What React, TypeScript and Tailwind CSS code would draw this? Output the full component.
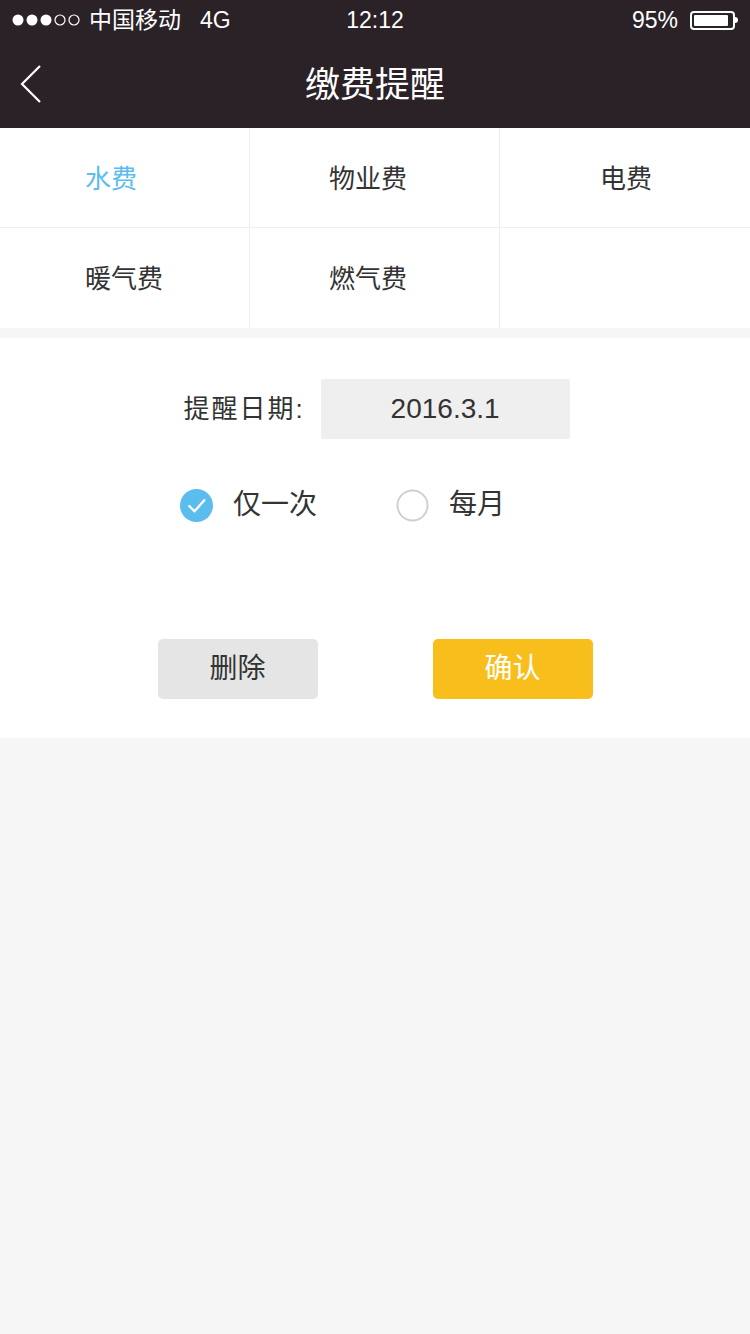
import { useState } from "react";

const fees = ["水费", "物业费", "电费", "暖气费", "燃气费", ""];
const padL = ["pl-[85px]", "pl-[79px]", "pl-[100px]"];

const font = { fontFamily: '"Liberation Sans", "Noto Sans CJK SC", sans-serif' };

function Radio({ checked }: { checked: boolean }) {
  if (checked) {
    return (
      <svg width="33" height="33" viewBox="0 0 34 34">
        <circle cx="17" cy="17" r="17" fill="#5bbcef" />
        <path d="M9.5 17.5 L15 23 L25 11.5" fill="none" stroke="#fff" strokeWidth="2.4" strokeLinecap="round" strokeLinejoin="round" />
      </svg>
    );
  }
  return (
    <svg width="33" height="33" viewBox="0 0 34 34">
      <circle cx="17" cy="17" r="15.5" fill="#fff" stroke="#cfcfcf" strokeWidth="2" />
    </svg>
  );
}

function Signal() {
  return (
    <svg width="68" height="14" viewBox="0 0 68 14">
      {[0, 1, 2, 3, 4].map((i) => (
        <circle
          key={i}
          cx={6 + i * 14}
          cy={7}
          r={i < 3 ? 5.5 : 5}
          fill={i < 3 ? "#fff" : "none"}
          stroke="#fff"
          strokeWidth={i < 3 ? 0 : 1.2}
        />
      ))}
    </svg>
  );
}

export default function App() {
  const [active, setActive] = useState(0);
  const [mode, setMode] = useState<"once" | "month">("once");

  return (
    <div className="w-[750px] min-h-[1334px] bg-[#f6f6f6]" style={font}>
      {/* status + nav */}
      <div className="bg-[#2b2228] text-white">
        <div className="h-10 flex items-center justify-between px-3 text-[23px]">
          <div className="flex items-center gap-[9px] w-[260px]">
            <Signal />
            <span>中国移动</span>
            <span className="ml-[10px]">4G</span>
          </div>
          <span>12:12</span>
          <div className="flex items-center justify-end gap-3 w-[260px]">
            <span>95%</span>
            <div className="flex items-center">
              <div className="w-[45px] h-[19px] border-2 border-white rounded-[4px] p-[2px]">
                <div className="h-full w-[92%] bg-white rounded-[1px]" />
              </div>
              <div className="w-[3px] h-[6px] bg-white rounded-r-sm" />
            </div>
          </div>
        </div>
        <div className="h-[88px] flex items-center relative">
          <svg className="absolute left-[19px] top-[24px]" width="24" height="40" viewBox="0 0 24 40">
            <path d="M21 2 L3 20 L21 38" fill="none" stroke="#fff" strokeWidth="2.2" />
          </svg>
          <h1 className="w-full text-center text-[35px] pt-[2px]">缴费提醒</h1>
        </div>
      </div>

      {/* fee grid */}
      <div className="grid grid-cols-3 bg-white">
        {fees.map((f, i) => (
          <button
            key={i}
            onClick={() => f && setActive(i)}
            className={`h-[100px] flex items-center justify-start pt-[3px] text-[26px] border-[#efefef] ${padL[i % 3]} ${i % 3 !== 2 ? "border-r" : ""} ${i < 3 ? "border-b" : ""} ${active === i ? "text-[#5bbcef]" : "text-[#333]"}`}
          >
            {f}
          </button>
        ))}
      </div>

      <div className="mt-[10px] bg-white h-[400px] flex flex-col">
        <div className="flex items-center justify-center pt-[41px] pl-[3px]">
          <span className="text-[26px] text-[#333] mr-[16px] tracking-[2px]">提醒日期:</span>
          <div className="w-[249px] h-[60px] bg-[#efefef] rounded-[2px] flex items-center justify-center text-[28px] text-[#333]">
            2016.3.1
          </div>
        </div>
        <div className="flex items-center justify-start pl-[180px] mt-[45px]">
          <button className="flex items-center gap-[20px]" onClick={() => setMode("once")}>
            <Radio checked={mode === "once"} />
            <span className="text-[28px] text-[#333]">仅一次</span>
          </button>
          <button className="flex items-center gap-[20px] ml-[79px]" onClick={() => setMode("month")}>
            <Radio checked={mode === "month"} />
            <span className="text-[28px] text-[#333]">每月</span>
          </button>
        </div>
        <div className="flex justify-center gap-[115px] mt-[113px]">
          <button className="w-[160px] h-[60px] rounded-[5px] bg-[#e5e5e5] text-[28px] text-[#333]">删除</button>
          <button className="w-[160px] h-[60px] rounded-[5px] bg-[#f8bf1c] text-[28px] text-white">确认</button>
        </div>
      </div>
    </div>
  );
}
